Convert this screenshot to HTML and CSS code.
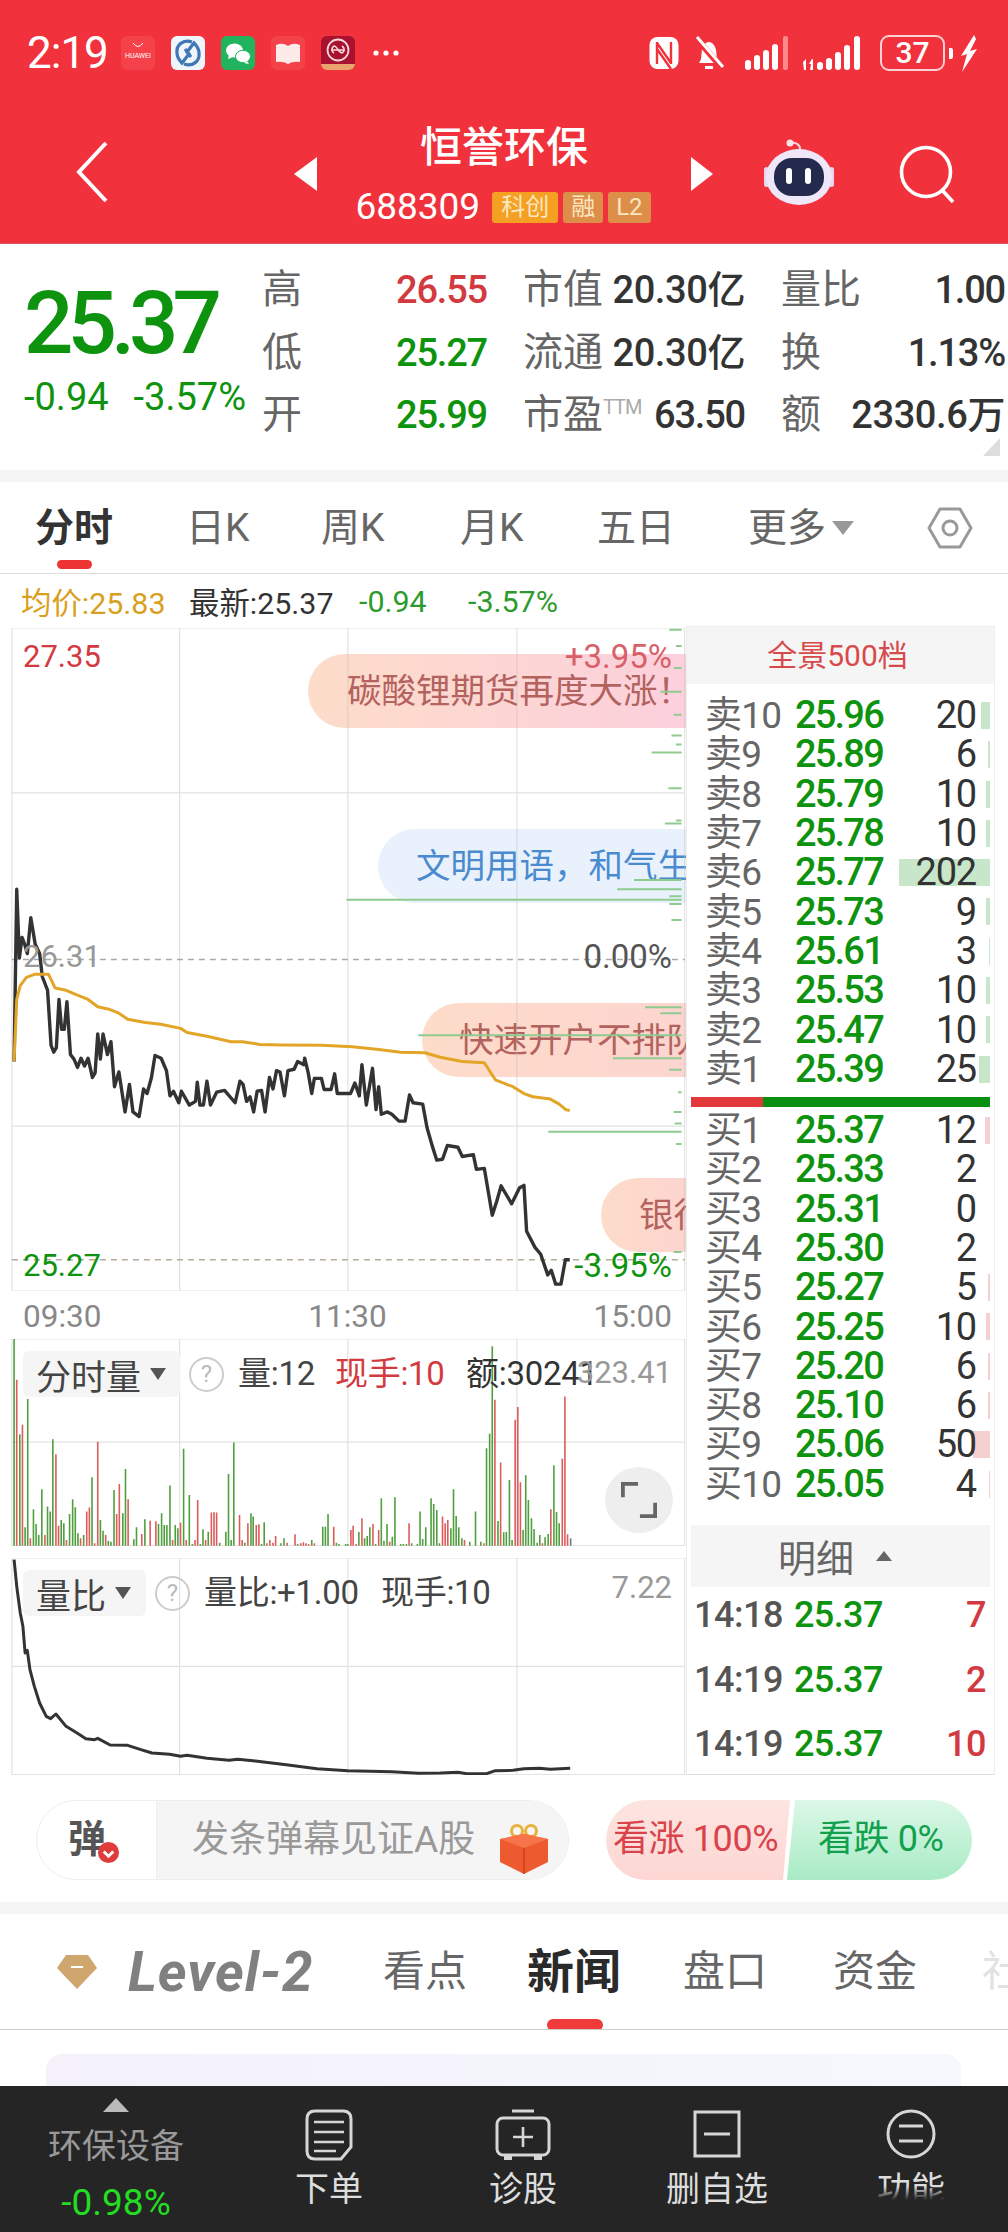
FILE: index.html
```html
<!DOCTYPE html>
<html lang="zh-CN">
<head>
<meta charset="utf-8">
<title>恒誉环保</title>
<link rel="stylesheet" href="styles.css">
</head>
<body>
<div class="page">
  <header class="head">
    <div class="status">
      <span class="clock">2:19</span>
      <div class="apps">
        <span class="app app-huawei"><svg viewBox="0 0 34 34" class="fill"><path d="M12 7q5 7 10 0" fill="none" stroke="#fff" stroke-width="1"/></svg><b>HUAWEI</b></span>
        <span class="app app-link"><svg viewBox="0 0 34 34" class="fill"><g fill="none" stroke="#3f78b5" stroke-width="3.2"><path d="M21 6C12 3 5 9 6 17c0 4 2 7 5 10l7-9-4-5"/><path d="M13 28c9 3 16-3 15-11 0-4-2-7-5-10l-7 9 4 5"/></g></svg></span>
        <span class="app app-wechat"><svg viewBox="0 0 34 34" class="fill"><ellipse cx="13.500" cy="14.500" rx="8.500" ry="7" fill="#fff"/><path d="M8 19l-1 4 5-2z" fill="#fff"/><ellipse cx="22" cy="20.500" rx="7.500" ry="6.200" fill="#fff" stroke="#22b35e"/><path d="M26 25l2 3-5-1z" fill="#fff"/></svg></span>
        <span class="app app-book"><svg viewBox="0 0 34 34" class="fill"><path d="M5 9q7-3 12 1 5-4 12-1v17q-7-1-12 2-5-3-12-2z" fill="#ffeaea"/></svg></span>
        <span class="app app-bank"><svg viewBox="0 0 34 34" class="fill"><circle cx="17" cy="14" r="10.500" fill="none" stroke="#f8d7dc" stroke-width="1.800"/><path d="M10 14h14M13 17a4 4 0 0 1 0-7c3 0 5 7 8 7a4 4 0 0 0 0-7" fill="none" stroke="#f8d7dc" stroke-width="1.600"/><path d="M0 28h34v6H0z" fill="#eaa36d"/></svg></span>
        <svg class="dots" viewBox="0 0 26 6"><circle cx="3" cy="3" r="2.600" fill="#fff"/><circle cx="13" cy="3" r="2.600" fill="#fff"/><circle cx="23" cy="3" r="2.600" fill="#fff"/></svg>
      </div>
      <div class="sys">
        <svg class="sys-nfc" viewBox="0 0 32 36"><rect x="1.500" y="2" width="29" height="32" rx="8" fill="#fff"/><path d="M9 7v22M23 7v22M9 8l14 20M9 14l14 20" fill="none" stroke="#f1323c" stroke-width="2.400"/></svg>
        <svg class="sys-bell" viewBox="0 0 32 36"><path d="M6 28c3-4 2-7 3-13 1-5 4-8 7-8s6 3 7 8c1 6 0 9 3 13z" fill="#fff"/><path d="M12 31h8v3h-8z" fill="#fff"/><path d="M3 3l26 30" stroke="#f1323c" stroke-width="6"/><path d="M4 2l26 30" stroke="#fff" stroke-width="3"/></svg>
        <svg class="sys-sig1" viewBox="0 0 45 36"><g fill="#fff"><rect x="0" y="25" width="6" height="10" rx="3"/><rect x="9" y="20" width="6" height="15" rx="3"/><rect x="18" y="15" width="6" height="20" rx="3"/><rect x="27" y="9" width="6" height="26" rx="3"/></g><rect x="38" y="1" width="5" height="34" rx="2" fill="#ff8a8a"/></svg>
        <svg class="sys-sig2" viewBox="0 0 64 36"><g fill="#fff"><path d="M0 27l3-3v11H1zM7 35l3 0V24h-1l-3 5 2 0z"/><rect x="14" y="27" width="6" height="8" rx="3"/><rect x="23" y="23" width="6" height="12" rx="3"/><rect x="32" y="17" width="6" height="18" rx="3"/><rect x="41" y="10" width="6" height="25" rx="3"/><rect x="51" y="1" width="6" height="34" rx="3"/></g></svg>
        <span class="batt"><span class="batt-box">37</span><span class="batt-tip"></span></span>
        <svg class="sys-bolt" viewBox="0 0 18 37"><path d="M14 0L1 21l6-2-5 18L17 14l-7 2 6-12z" fill="#fff"/></svg>
      </div>
    </div>
    <nav class="nav">
      <svg class="back" viewBox="0 0 34 62"><path d="M31 2L4 31l27 29" fill="none" stroke="#fff" stroke-width="4"/></svg>
      <span class="tri-l"></span>
      <div class="title">
        <div class="title-name">恒誉环保</div>
        <div class="title-code"><span class="code">688309</span><span class="tag tag-k">科创</span><span class="tag">融</span><span class="tag tag-l">L2</span></div>
      </div>
      <span class="tri-r"></span>
      <svg class="robot" viewBox="0 0 100 85"><path d="M50 21c1-6-4-9-9-8" fill="none" stroke="#f7d8df" stroke-width="2"/><circle cx="40" cy="13" r="3.500" fill="#fbe3e8"/><rect x="14" y="37" width="5" height="20" rx="2.500" fill="#e9d6ee"/><rect x="79" y="37" width="5" height="20" rx="2.500" fill="#e9d6ee"/><ellipse cx="49" cy="47" rx="33" ry="28" fill="#efe7f7"/><rect x="24" y="28" width="50" height="38" rx="18" fill="#242a4d"/><rect x="36" y="38" width="6" height="16" rx="3" fill="#fff"/><rect x="55" y="38" width="6" height="16" rx="3" fill="#fff"/></svg>
      <svg class="search" viewBox="0 0 56 58"><circle cx="27" cy="27" r="24.500" fill="none" stroke="#fff" stroke-width="3.600"/><path d="M43 45l11 12" stroke="#fff" stroke-width="3.600"/></svg>
    </nav>
  </header>

  <section class="quote">
    <div class="q-main">
      <div class="q-price">25.37</div>
      <div class="q-change"><span>-0.94</span><span>-3.57%</span></div>
    </div>
    <div class="q-grid">
      <div class="q-cell"><span class="q-l">高</span><span class="q-v up">26.55</span></div>
      <div class="q-cell"><span class="q-l">市值</span><span class="q-v q-wide">20.30亿</span></div>
      <div class="q-cell"><span class="q-l">量比</span><span class="q-v">1.00</span></div>
      <div class="q-cell"><span class="q-l">低</span><span class="q-v down">25.27</span></div>
      <div class="q-cell"><span class="q-l">流通</span><span class="q-v q-wide">20.30亿</span></div>
      <div class="q-cell"><span class="q-l">换</span><span class="q-v">1.13%</span></div>
      <div class="q-cell"><span class="q-l">开</span><span class="q-v down">25.99</span></div>
      <div class="q-cell"><span class="q-l">市盈<sup class="ttm">TTM</sup></span><span class="q-v">63.50</span></div>
      <div class="q-cell"><span class="q-l">额</span><span class="q-v q-wide">2330.6万</span></div>
    </div>
    <span class="corner"></span>
  </section>
  <div class="band"></div>

  <div class="tabs">
    <span class="tab tab-on">分时</span>
    <span class="tab">日K</span>
    <span class="tab">周K</span>
    <span class="tab">月K</span>
    <span class="tab">五日</span>
    <span class="tab tab-more">更多<i class="caret"></i></span>
    <svg class="hex" viewBox="0 0 46 42"><path d="M13 2h20l11 19-11 19H13L2 21z" fill="none" stroke="#999" stroke-width="3" stroke-linejoin="round"/><circle cx="23" cy="21" r="7" fill="none" stroke="#999" stroke-width="3"/></svg>
  </div>

  <div class="info">
    <span class="i-avg">均价:25.83</span>
    <span class="i-new">最新:25.37</span>
    <span class="i-d1">-0.94</span>
    <span class="i-d2">-3.57%</span>
  </div>

  <div class="market">
    <div class="charts">
      <div class="price-chart">
        <div class="pill pill-a">碳酸锂期货再度大涨！</div>
        <div class="pill pill-b">文明用语，和气生</div>
        <div class="pill pill-c">快速开户不排队</div>
        <div class="pill pill-d">银行</div>
        <svg class="plot" viewBox="0 61 1558 1444" preserveAspectRatio="none">
          <path class="grid" d="M27 61H1555V1505H27ZM408 61V1505M790 61V1505M1174 61V1505M27 420H1555M27 1146H1555"/>
          <path class="depth" d="M1520 65H1548M1535 100H1548M1530 148H1548M1500 200H1548M1530 250H1548M1525 295H1548M1535 315H1548M1480 332H1548M1518 410H1548M1535 480H1548M1510 487H1548M1440 610H1548M1402 630H1548M1520 645H1548M787 653H1548M1520 662H1548M1525 697H1548M1465 887H1548M1500 900H1548M950 948H1548M1392 998H1548M1520 1023H1548M1540 1072H1548M1530 1115H1548M1532 1140H1548M1245 1158H1548M1535 1185H1548M1530 1420H1548"/>
          <path class="dash" d="M27 783H1555"/>
          <path class="dash dash-low" d="M27 1437H1555"/>
          <path class="price-line" d="M32 1005L38 630L44 780L50 735L56 750L62 770L70 692L80 750L90 770L96 820L108 850L116 970L122 985L128 975L134 870L140 935L146 935L152 875L160 990L168 1000L176 1018L184 998L192 1015L200 998L210 1040L216 1030L222 945L228 1000L234 945L244 990L252 962L260 1060L270 1028L284 1115L294 1055L302 1115L316 1125L326 1065L334 1075L344 1040L352 992L366 998L378 1025L386 1080L394 1070L406 1095L412 1070L430 1100L444 1092L448 1050L454 1100L462 1100L470 1048L478 1100L492 1072L510 1068L534 1095L545 1048L552 1055L560 1092L568 1082L576 1115L584 1070L594 1068L602 1115L612 1040L620 1065L628 1025L636 1028L646 1080L654 1025L668 1022L676 1005L690 1012L692 998L700 1030L708 1075L714 1042L730 1042L736 1066L752 1066L760 1032L766 1075L796 1075L806 1052L816 1080L822 1012L832 1100L846 1020L854 1110L860 1060L866 1120L880 1115L890 1120L906 1135L920 1135L930 1078L938 1095L960 1098L970 1150L982 1190L992 1220L1005 1218L1016 1188L1040 1192L1050 1212L1075 1208L1082 1240L1100 1238L1118 1340L1128 1310L1138 1276L1162 1315L1180 1280L1190 1275L1196 1375L1215 1410L1228 1425L1244 1470L1252 1460L1262 1490L1274 1490L1284 1437L1294 1437"/>
          <path class="avg-line" d="M32 1005L38 870L46 840L60 822L80 815L110 815L125 845L150 850L180 862L200 870L222 886L250 892L270 900L290 913L330 920L365 924L410 933L425 942L470 950L525 962L550 962L590 968L640 969L730 970L800 973L860 979L910 985L965 986L1000 996L1050 1005L1100 1008L1125 1045L1165 1060L1190 1075L1210 1082L1250 1087L1270 1098L1285 1110L1294 1112"/>
        </svg>
        <span class="c-lab c-top up">27.35</span>
        <span class="c-lab c-mid">26.31</span>
        <span class="c-lab c-low down">25.27</span>
        <span class="c-pct c-top up-soft">+3.95%</span>
        <span class="c-pct c-mid pct-dark">0.00%</span>
        <span class="c-pct c-low down">-3.95%</span>
      </div>
      <div class="times"><span>09:30</span><span>11:30</span><span>15:00</span></div>
      <div class="vol-chart">
        <svg class="plot" viewBox="0 58 1558 620" preserveAspectRatio="none">
          <path class="grid" d="M27 58H1555V677H27ZM408 58V677M790 58V677M1174 58V677M27 367H1555"/>
          <path class="bar-g" d="M32 677V58M45 677V343M57 677V622M63 677V238M76 677V568M82 677V612M88 677V645M95 677V508M108 677V560M114 677V575M120 677V358M139 677V600M145 677V610M158 677V582M165 677V538M171 677V562M177 677V640M190 677V645M209 677V472M228 677V600M234 677V632M246 677V662M252 677V665M259 677V510M279 677V580M285 677V447M304 677V658M310 677V622M329 677V598M360 677V612M367 677V580M373 677V615M379 677V615M386 677V497M398 677V615M404 677V625M417 677V387M430 677V525M437 677V672M455 677V672M461 677V628M473 677V635M499 677V668M513 677V635M519 677V462M525 677V660M531 677V368M556 677V668M570 677V580M575 677V590M594 677V672M600 677V607M638 677V670M645 677V655M676 677V672M708 677V660M733 677V620M739 677V620M745 677V582M764 677V668M770 677V672M785 677V672M790 677V672M815 677V636M828 677V655M834 677V648M840 677V622M853 677V672M866 677V535M872 677V662M879 677V612M891 677V650M897 677V532M910 677V672M916 677V672M923 677V672M935 677V670M948 677V672M954 677V575M960 677V657M967 677V622M979 677V535M985 677V552M992 677V570M998 677V670M1024 677V625M1030 677V508M1036 677V588M1042 677V622M1049 677V655M1067 677V665M1080 677V575M1092 677V665M1105 677V385M1112 677V342M1118 677V80M1131 677V603M1144 677V637M1150 677V636M1157 677V480M1163 677V660M1188 677V630M1194 677V466M1200 677V540M1207 677V595M1213 677V627M1220 677V668M1226 677V645M1238 677V652M1245 677V642M1258 677V436M1264 677V576M1270 677V610"/>
          <path class="bar-r" d="M38 677V180M51 677V315M69 677V655M102 677V645M127 677V403M133 677V617M151 677V660M183 677V655M197 677V575M203 677V563M215 677V670M222 677V366M240 677V645M265 677V582M271 677V492M291 677V538M322 677V642M341 677V602M354 677V604M392 677V660M410 677V608M423 677V660M443 677V660M449 677V540M467 677V660M480 677V578M486 677V577M492 677V578M544 677V585M550 677V660M563 677V610M582 677V615M588 677V613M606 677V670M613 677V660M620 677V668M626 677V648M652 677V668M670 677V643M683 677V670M689 677V667M695 677V670M701 677V672M714 677V670M758 677V620M797 677V630M802 677V617M809 677V672M822 677V595M847 677V612M860 677V630M885 677V665M929 677V610M1005 677V590M1011 677V610M1017 677V600M1055 677V660M1099 677V670M1124 677V240M1137 677V428M1170 677V300M1176 677V262M1182 677V487M1232 677V670M1251 677V568M1277 677V417M1283 677V230M1289 677V643"/>
          <path class="bar-n" d="M1296 677V655"/>
        </svg>
        <div class="c-head">
          <span class="c-sel">分时量<i class="sel-caret"></i></span>
          <span class="help">?</span>
          <span class="c-txt c-liang">量:12</span>
          <span class="c-txt c-now">现手:10</span>
          <span class="c-txt c-amt">额:30241</span>
        </div>
        <span class="c-max">323.41</span>
        <span class="expand"><svg viewBox="0 0 38 38"><path d="M2 16V2h16M36 22v14H20" fill="none" stroke="#666" stroke-width="4"/></svg></span>
      </div>
      <div class="ratio-chart">
        <svg class="plot" viewBox="0 715 1558 651" preserveAspectRatio="none">
          <path class="grid" d="M27 715H1555V1365H27ZM408 715V1365M790 715V1365M1174 715V1365M27 1040H1555"/>
          <path class="ratio-line" d="M32 720L38 800L46 880L52 920L57 1000L62 992L68 1050L78 1100L90 1150L105 1190L115 1197L127 1183L150 1220L175 1240L195 1257L215 1260L222 1256L250 1276L290 1277L320 1290L345 1300L385 1304L410 1310L425 1307L470 1316L520 1322L540 1319L580 1324L650 1335L720 1347L790 1353L890 1356L950 1361L1000 1360L1040 1358L1060 1362L1105 1362L1125 1353L1165 1352L1190 1347L1225 1346L1250 1349L1295 1346"/>
        </svg>
        <div class="c-head">
          <span class="c-sel c-sel-s">量比<i class="sel-caret"></i></span>
          <span class="help help-s">?</span>
          <span class="c-txt c-ratio">量比:+1.00</span>
          <span class="c-txt c-hand">现手:10</span>
        </div>
        <span class="c-max c-max-s">7.22</span>
      </div>
    </div>

    <aside class="book">
      <div class="book-head">全景500档</div>
      <div class="rows rows-sell">
        <div class="row"><span class="r-l">卖10</span><span class="r-p">25.96</span><span class="r-q">20</span><i class="r-bar" style="width:9px"></i></div>
        <div class="row"><span class="r-l">卖9</span><span class="r-p">25.89</span><span class="r-q">6</span><i class="r-bar" style="width:2px"></i></div>
        <div class="row"><span class="r-l">卖8</span><span class="r-p">25.79</span><span class="r-q">10</span><i class="r-bar" style="width:4px"></i></div>
        <div class="row"><span class="r-l">卖7</span><span class="r-p">25.78</span><span class="r-q">10</span><i class="r-bar" style="width:4px"></i></div>
        <div class="row"><span class="r-l">卖6</span><span class="r-p">25.77</span><span class="r-q">202</span><i class="r-bar" style="width:91px"></i></div>
        <div class="row"><span class="r-l">卖5</span><span class="r-p">25.73</span><span class="r-q">9</span><i class="r-bar" style="width:4px"></i></div>
        <div class="row"><span class="r-l">卖4</span><span class="r-p">25.61</span><span class="r-q">3</span><i class="r-bar" style="width:1px"></i></div>
        <div class="row"><span class="r-l">卖3</span><span class="r-p">25.53</span><span class="r-q">10</span><i class="r-bar" style="width:4px"></i></div>
        <div class="row"><span class="r-l">卖2</span><span class="r-p">25.47</span><span class="r-q">10</span><i class="r-bar" style="width:4px"></i></div>
        <div class="row"><span class="r-l">卖1</span><span class="r-p">25.39</span><span class="r-q">25</span><i class="r-bar" style="width:11px"></i></div>
      </div>
      <div class="split"><i class="split-red"></i></div>
      <div class="rows rows-buy">
        <div class="row"><span class="r-l">买1</span><span class="r-p">25.37</span><span class="r-q">12</span><i class="r-bar r-red" style="width:5px"></i></div>
        <div class="row"><span class="r-l">买2</span><span class="r-p">25.33</span><span class="r-q">2</span></div>
        <div class="row"><span class="r-l">买3</span><span class="r-p">25.31</span><span class="r-q">0</span></div>
        <div class="row"><span class="r-l">买4</span><span class="r-p">25.30</span><span class="r-q">2</span></div>
        <div class="row"><span class="r-l">买5</span><span class="r-p">25.27</span><span class="r-q">5</span><i class="r-bar r-red" style="width:2px"></i></div>
        <div class="row"><span class="r-l">买6</span><span class="r-p">25.25</span><span class="r-q">10</span><i class="r-bar r-red" style="width:4px"></i></div>
        <div class="row"><span class="r-l">买7</span><span class="r-p">25.20</span><span class="r-q">6</span><i class="r-bar r-red" style="width:2px"></i></div>
        <div class="row"><span class="r-l">买8</span><span class="r-p">25.10</span><span class="r-q">6</span><i class="r-bar r-red" style="width:2px"></i></div>
        <div class="row"><span class="r-l">买9</span><span class="r-p">25.06</span><span class="r-q">50</span><i class="r-bar r-red" style="width:17px"></i></div>
        <div class="row"><span class="r-l">买10</span><span class="r-p">25.05</span><span class="r-q">4</span><i class="r-bar r-red" style="width:1px"></i></div>
      </div>
      <div class="detail-head">明细<i class="up-caret"></i></div>
      <div class="ticks">
        <div class="tick"><span class="t-t">14:18</span><span class="t-p">25.37</span><span class="t-q">7</span></div>
        <div class="tick"><span class="t-t">14:19</span><span class="t-p">25.37</span><span class="t-q">2</span></div>
        <div class="tick"><span class="t-t">14:19</span><span class="t-p">25.37</span><span class="t-q">10</span></div>
      </div>
    </aside>
  </div>

  <section class="comment">
    <div class="cbar">
      <span class="cbar-dan">弹<svg class="cbar-check" viewBox="0 0 24 24"><circle cx="12" cy="12" r="11" fill="#e03c3c"/><path d="M7 11l5 5 5-5" fill="none" stroke="#fff" stroke-width="3"/></svg></span>
      <span class="cbar-input">发条弹幕见证A股
        <svg class="gift" viewBox="0 0 48 50"><circle cx="17" cy="7" r="5.500" fill="none" stroke="#e9b23a" stroke-width="3"/><circle cx="31" cy="7" r="5.500" fill="none" stroke="#e9b23a" stroke-width="3"/><path d="M0 15l24-5 24 5v23L24 50 0 38z" fill="#ee5a2f"/><path d="M0 15l24 9 24-9-24-5z" fill="#f7744a"/><path d="M24 24v26" stroke="#c9401c" stroke-width="1.500"/></svg>
      </span>
    </div>
    <div class="vote">
      <span class="vote-up">看涨 100%</span>
      <span class="vote-down">看跌 0%</span>
    </div>
  </section>
  <div class="band"></div>

  <div class="subtabs">
    <svg class="diamond" viewBox="0 0 40 34"><path d="M9 0h22l9 13-20 21L0 13z" fill="#cfa76e"/><path d="M14 12h12" stroke="#fff" stroke-width="2"/></svg>
    <span class="level">Level-2</span>
    <span class="st st-a">看点</span>
    <span class="st st-on">新闻</span>
    <span class="st st-c">盘口</span>
    <span class="st st-d">资金</span>
    <span class="st st-e">社区</span>
  </div>
  <div class="card-wrap"><div class="card"></div></div>

  <footer class="foot">
    <div class="f-sector">
      <i class="f-tri"></i>
      <span class="f-name">环保设备</span>
      <span class="f-pct">-0.98%</span>
    </div>
    <div class="f-item">
      <svg class="f-ic" viewBox="0 0 48 52"><path d="M10 2h28q8 0 8 8v28L36 50H10q-8 0-8-8V10q0-8 8-8z" fill="none" stroke="#d6d6d6" stroke-width="3"/><path d="M9 13h30M9 23h30M9 33h30M9 42h22" stroke="#d6d6d6" stroke-width="2.600"/></svg>
      <span>下单</span>
    </div>
    <div class="f-item">
      <svg class="f-ic" viewBox="0 0 56 52"><path d="M17 2h22" stroke="#d6d6d6" stroke-width="3"/><rect x="2" y="9" width="52" height="37" rx="6" fill="none" stroke="#d6d6d6" stroke-width="3"/><path d="M28 18v20M18 28h20" stroke="#d6d6d6" stroke-width="2.600"/><path d="M9 47h8v4H9zM39 47h8v4h-8z" fill="#d6d6d6"/></svg>
      <span>诊股</span>
    </div>
    <div class="f-item">
      <svg class="f-ic" viewBox="0 0 48 52"><rect x="2" y="3" width="44" height="44" fill="none" stroke="#d6d6d6" stroke-width="3"/><path d="M11 25h26" stroke="#d6d6d6" stroke-width="3"/></svg>
      <span>删自选</span>
    </div>
    <div class="f-item">
      <svg class="f-ic" viewBox="0 0 50 52"><circle cx="25" cy="25" r="23" fill="none" stroke="#d6d6d6" stroke-width="3"/><path d="M13 17h24M13 32h24" stroke="#d6d6d6" stroke-width="3"/></svg>
      <span>功能</span>
    </div>
    <span class="f-fade"></span>
  </footer>
</div>
</body>
</html>
```

FILE: styles.css
```css
* { box-sizing: border-box; }
html, body { margin: 0; padding: 0; background: #fff; }
body { font-family: Roboto, "Noto Sans CJK SC", sans-serif; color: #333; }
i { display: block; font-style: normal; }
.page { width: 1008px; height: 2232px; overflow: hidden; display: flex; flex-direction: column; position: relative; }
.up { color: #d33a40; }
.down { color: #0e930e; }

/* header */
.head { height: 244px; background: #f1323c; flex: none; color: #fff; border-bottom: 1px solid #d8555a; }
.status { height: 106px; display: flex; align-items: center; padding-left: 27px; }
.clock { font-size: 44px; width: 94px; line-height: 50px; letter-spacing: -1px; white-space: nowrap; }
.apps { display: flex; align-items: center; gap: 16px; width: 532px; }
.app { width: 34px; height: 34px; border-radius: 6px; position: relative; display: block; overflow: hidden; }
.fill { display: block; width: 34px; height: 34px; }
.app-huawei { background: #f5424a; }
.app-huawei b { position: absolute; left: 0; right: 0; top: 15px; text-align: center; font-size: 7px; font-weight: 400; line-height: 10px; }
.app-link { background: #eef5fb; }
.app-wechat { background: #22b35e; }
.app-book { background: #f5424a; }
.app-bank { background: #a8122f; }
.dots { width: 26px; height: 6px; margin-left: 2px; display: block; }
.sys { display: flex; align-items: center; }
.sys svg { display: block; }
.sys-nfc { width: 32px; height: 36px; margin-left: -5px; }
.sys-bell { width: 32px; height: 36px; margin-left: 13px; }
.sys-sig1 { width: 45px; height: 36px; margin-left: 20px; }
.sys-sig2 { width: 64px; height: 36px; margin-left: 13px; }
.batt { display: flex; align-items: center; margin-left: 13px; }
.batt-box { width: 65px; height: 36px; border: 2.500px solid #fbd2d4; border-radius: 9px; font-size: 30px; line-height: 31px; text-align: center; font-weight: 500; }
.batt-tip { width: 4px; height: 11px; background: #fff; border-radius: 0 2px 2px 0; margin-left: 4px; }
.sys-bolt { width: 18px; height: 37px; margin-left: 7px; }
.nav { height: 137px; display: flex; align-items: flex-start; padding-left: 75px; }
.back { width: 34px; height: 62px; margin-top: 35px; flex: none; }
.tri-l { margin: 51px 0 0 185px; border: solid transparent; border-width: 17px 23px 17px 0; border-right-color: #fff; flex: none; }
.tri-r { margin-top: 51px; border: solid transparent; border-width: 17px 0 17px 22px; border-left-color: #fff; flex: none; }
.title { width: 374px; margin-top: 16px; flex: none; text-align: center; }
.title-name { font-size: 42px; line-height: 52px; font-weight: 500; }
.title-code { margin-top: 15px; height: 36px; display: flex; align-items: center; justify-content: center; gap: 5px; padding-right: 2px; }
.code { font-size: 37px; line-height: 36px; letter-spacing: 0; margin-right: 7px; }
.tag { background: #dd8f4a; color: #fbe6c0; font-size: 24px; line-height: 31px; height: 31px; padding: 0 8px; border-radius: 3px; }
.tag-k { background: #f4a023; padding: 0 9px; }
.tag-l { padding: 0 8px; }
.robot { width: 100px; height: 85px; margin: 24px 0 0 37px; flex: none; }
.search { width: 56px; height: 58px; margin: 39px 0 0 49px; flex: none; }

/* quote */
.quote { height: 226px; flex: none; display: flex; position: relative; }
.q-main { width: 262px; padding: 36px 0 0 24px; flex: none; color: #0e930e; }
.q-price { font-size: 87px; line-height: 87px; font-weight: 500; letter-spacing: -6px; }
.q-change { display: flex; gap: 25px; font-size: 38px; line-height: 60px; letter-spacing: 0; }
.q-grid { display: grid; grid-template-columns: 225px 222px 224px; column-gap: 36px; grid-auto-rows: 62.500px; padding-top: 15px; }
.q-cell { display: flex; justify-content: space-between; align-items: center; }
.q-l { font-size: 40px; line-height: 48px; color: #666; white-space: nowrap; }
.ttm { font-size: 20px; line-height: 20px; color: #aaa; vertical-align: 14px; letter-spacing: -1px; }
.q-v { font-size: 38px; line-height: 48px; font-weight: 500; letter-spacing: -1.200px; white-space: nowrap; }
.q-wide { letter-spacing: -.4px; }
.corner { position: absolute; right: 8px; top: 194px; border: solid transparent; border-width: 0 0 18px 17px; border-bottom-color: #ddd; }
.band { height: 12px; background: #f5f5f5; flex: none; }

/* tabs */
.tabs { height: 92px; flex: none; display: grid; grid-template-columns: 151px 135px 139px 137px 151px 179px 46px; align-items: center; padding: 0 0 0 35px; border-bottom: 1px solid #ddd; position: relative; }
.tab { font-size: 39px; line-height: 50px; color: #666; position: relative; }
.tab-on { color: #333; font-weight: 700; }
.tab-on::after { content: ""; position: absolute; left: 22px; width: 35px; height: 9px; top: 57px; background: #e33; border-radius: 5px; }
.tab-more { display: flex; align-items: center; gap: 6px; }
.caret { border: solid transparent; border-width: 14px 11px 0; border-top-color: #999; }
.hex { width: 46px; height: 42px; display: block; }

/* info line */
.info { height: 52px; flex: none; display: flex; align-items: center; font-size: 30.400px; position: relative; padding-left: 21px; padding-top: 2px; }
.i-avg { color: #d9a020; width: 168px; }
.i-new { color: #333; width: 170px; }
.i-d1 { color: #2d9a2d; width: 109px; }
.i-d2 { color: #2d9a2d; }

/* market */
.market { display: flex; flex: none; height: 1149px; }
.charts { width: 686px; flex: none; padding-top: 2px; }
.price-chart, .vol-chart, .ratio-chart { position: relative; overflow: hidden; width: 686px; }
.price-chart { height: 663px; }
.vol-chart { height: 207px; }
.ratio-chart { height: 217px; margin-top: 12px; }
.plot { position: absolute; left: 0; top: 0; width: 100%; height: 100%; display: block; }
.grid, .dash, .depth, .price-line, .avg-line, .ratio-line, .bar-g, .bar-r, .bar-n { fill: none; vector-effect: non-scaling-stroke; }
.grid { stroke: rgba(190,190,190,.45); stroke-width: 1.200px; }
.depth { stroke: #8fcb8f; stroke-width: 2px; }
.dash { stroke: #aaa; stroke-width: 1.500px; stroke-dasharray: 6 5; }
.dash-low { stroke: #b5ab9b; }
.price-line { stroke: #333; stroke-width: 3.400px; stroke-linejoin: round; }
.avg-line { stroke: #e2a528; stroke-width: 3px; stroke-linejoin: round; }
.ratio-line { stroke: #333; stroke-width: 3px; stroke-linejoin: round; }
.bar-g { stroke: #4f9f3e; stroke-width: 1.600px; }
.bar-r { stroke: #dc5c5c; stroke-width: 1.600px; }
.bar-n { stroke: #777; stroke-width: 1.600px; }
.pill { position: absolute; height: 74px; border-radius: 37px 0 0 37px; font-size: 34.500px; line-height: 74px; white-space: nowrap; overflow: hidden; right: 0; color: #b3625e; }
.pill-a { left: 308px; top: 26px; padding-left: 39px; background: linear-gradient(90deg, #fddcc9, #fcd0dd); }
.pill-b { left: 378px; top: 201px; padding-left: 38px; background: #e9f2fc; color: #4a8bd0; }
.pill-c { left: 422px; top: 375px; padding-left: 37px; background: linear-gradient(90deg, #fddcc9, #fdd5d0); }
.pill-d { left: 601px; top: 550px; padding-left: 38px; background: linear-gradient(90deg, #fddcc9, #fdd5d0); }
.c-lab, .c-pct { position: absolute; line-height: 36px; }
.c-lab { left: 23px; font-size: 31px; }
.c-pct { right: 14px; font-size: 33px; }
.c-top { top: 11px; }
.c-mid { top: 311px; }
.c-low { top: 620px; }
.c-lab.c-mid { color: #999; }
.pct-dark { color: #555; }
.up-soft { color: #d86068; }
.times { height: 48px; display: flex; justify-content: space-between; align-items: center; padding: 3px 14px 0 23px; font-size: 31.500px; color: #888; }
.c-head { position: absolute; left: 23px; top: 12px; height: 46px; display: flex; align-items: center; }
.c-sel { height: 46px; width: 157px; background: #f5f5f5; border-radius: 6px; display: flex; align-items: center; padding-left: 13px; font-size: 35px; color: #444; white-space: nowrap; }
.c-sel-s { width: 123px; }
.sel-caret { margin-left: 9px; border: solid transparent; border-width: 12px 8px 0; border-top-color: #555; }
.help { width: 35px; height: 35px; border: 2.500px solid #ccc; border-radius: 50%; margin-left: 9px; text-align: center; color: #bbb; font-size: 24px; line-height: 30px; flex: none; }
.c-txt { font-size: 33px; line-height: 46px; color: #444; white-space: nowrap; letter-spacing: -.3px; }
.c-liang { margin-left: 14px; width: 97px; }
.c-now { color: #d33a40; width: 131px; }
.c-amt { color: #333; }
.c-ratio { margin-left: 14px; width: 177px; }
.c-max { position: absolute; right: 14px; top: 11px; font-size: 31px; line-height: 46px; color: #999; }
.c-max-s { top: 7px; }
.expand { position: absolute; left: 605px; top: 128px; width: 68px; height: 66px; border-radius: 50%; background: #eee; display: flex; align-items: center; justify-content: center; }
.expand svg { width: 36px; height: 36px; display: block; }

/* order book */
.book { width: 309px; height: 1149px; flex: none; border: 1.500px solid #eee; border-bottom-color: #ddd; }
.book-head { height: 57px; background: #f5f5f5; color: #d84a4a; font-size: 30px; line-height: 57px; text-align: center; padding-right: 6px; }
.rows { display: flex; flex-direction: column; }
.rows-sell { margin-top: 12px; }
.rows-buy { margin-top: 4px; }
.row { height: 39.300px; position: relative; display: flex; align-items: center; padding: 0 18px 0 18px; }
.r-l { width: 90px; font-size: 37px; line-height: 39px; color: #666; white-space: nowrap; letter-spacing: -.8px; position: relative; }
.r-p { width: 100px; font-size: 38px; line-height: 39px; font-weight: 500; color: #0e930e; letter-spacing: -1.800px; position: relative; }
.r-q { flex: 1; text-align: right; font-size: 38px; line-height: 39px; color: #333; letter-spacing: -1.200px; position: relative; z-index: 1; }
.r-bar { position: absolute; right: 4px; top: 6px; height: 27px; background: #c8e6c9; }
.r-red { background: #f6cfd1; }
.split { height: 10px; margin: 8px 4px 0; background: #0a8f0f; }
.split-red { width: 72px; height: 10px; background: #e23a3a; }
.detail-head { height: 62px; margin: 21px 4px 0; background: #f5f5f5; display: flex; align-items: center; justify-content: flex-start; padding-left: 87px; font-size: 38px; color: #666; }
.up-caret { margin-left: 22px; border: solid transparent; border-width: 0 8.500px 10px; border-bottom-color: #666; }
.ticks { margin-top: -4px; }
.tick { height: 64.500px; display: flex; align-items: center; padding: 0 8px 0 7px; font-size: 36px; }
.t-t { width: 100px; color: #555; letter-spacing: -.5px; font-weight: 500; }
.t-p { width: 100px; color: #0e930e; font-weight: 500; letter-spacing: -.6px; }
.t-q { flex: 1; text-align: right; color: #d33a40; font-weight: 500; letter-spacing: -.5px; }

/* comment bar */
.comment { height: 127px; flex: none; display: flex; padding: 25px 0 0 36px; }
.cbar { width: 533px; height: 80px; border: 1.500px solid #eee; border-radius: 40px; display: flex; overflow: hidden; }
.cbar-dan { width: 119px; flex: none; font-size: 38px; font-weight: 700; line-height: 76px; color: #555; padding-left: 31px; position: relative; }
.cbar-check { position: absolute; left: 60px; top: 40px; width: 23px; height: 23px; display: block; }
.cbar-input { flex: 1; background: #f5f5f5; padding-left: 35px; font-size: 37px; line-height: 78px; color: #999; position: relative; border-left: 1px solid #eee; white-space: nowrap; }
.gift { position: absolute; left: 343px; top: 23px; width: 48px; height: 50px; display: block; }
.vote { width: 366px; height: 80px; margin-left: 37px; border-radius: 40px; overflow: hidden; display: flex; font-size: 36px; line-height: 78px; position: relative; background: #fff; }
.vote-up { width: 189px; flex: none; padding-left: 7px; color: #d9434b; background: linear-gradient(180deg, #fde5e2, #fdd6d2); clip-path: polygon(0 0, 184px 0, 177px 100%, 0 100%); white-space: nowrap; letter-spacing: -.4px; }
.vote-down { flex: 1; margin-left: -11px; padding-left: 34px; color: #12a04e; white-space: nowrap; letter-spacing: -.4px; background: linear-gradient(180deg, #dcf8e8, #a8ebc4); clip-path: polygon(11px 0, 100% 0, 100% 100%, 3px 100%); }

/* sub tabs */
.subtabs { height: 116px; flex: none; display: flex; align-items: center; border-bottom: 1px solid #ccc; padding-left: 57px; position: relative; overflow: hidden; }
.diamond { width: 40px; height: 34px; display: block; flex: none; }
.level { font-size: 55px; font-weight: 700; font-style: italic; color: #808080; margin-left: 31px; width: 255px; flex: none; letter-spacing: 1px; line-height: 60px; }
.st { font-size: 42px; color: #666; line-height: 56px; flex: none; }
.st-on { font-size: 47px; font-weight: 700; color: #2a2a2a; margin-left: 60px; position: relative; }
.st-on::after { content: ""; position: absolute; left: 20px; width: 56px; height: 12px; top: 75px; background: #f13a3a; border-radius: 6px; }
.st-c { margin-left: 62px; }
.st-d { margin-left: 66px; }
.st-e { margin-left: 65px; color: #e2e2e2; }
.card-wrap { flex: none; height: 56px; padding: 24px 47px 0 46px; }
.card { height: 32px; border-radius: 16px 16px 0 0; background: linear-gradient(90deg, #f4f1fb, #f5f8fd); }

/* footer */
.foot { height: 147px; flex: none; background: #252525; display: grid; grid-template-columns: 232px repeat(4, 194px); position: relative; overflow: hidden; }
.f-sector { display: flex; flex-direction: column; align-items: center; padding-top: 12px; }
.f-tri { border: solid transparent; border-width: 0 13px 14px; border-bottom-color: #bbb; }
.f-name { font-size: 34px; line-height: 40px; color: #999; margin-top: 14px; white-space: nowrap; }
.f-pct { font-size: 37px; line-height: 40px; color: #22dd22; margin-top: 17px; }
.f-item { display: flex; flex-direction: column; align-items: center; padding-top: 23px; color: #ddd; font-size: 34px; }
.f-item span { line-height: 44px; margin-top: 6px; white-space: nowrap; }
.f-ic { width: 56px; height: 52px; display: block; }
.f-fade { position: absolute; left: 800px; top: 100px; width: 208px; height: 47px; background: linear-gradient(180deg, rgba(37,37,37,0), #252525 30%); }
```
